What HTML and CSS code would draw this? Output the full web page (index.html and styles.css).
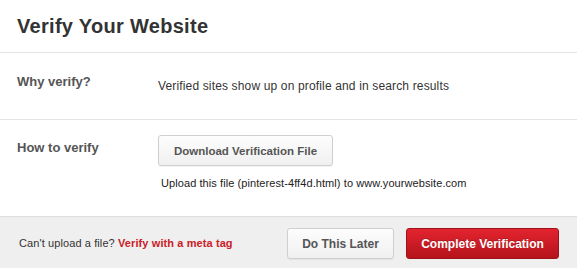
FILE: index.html
```html
<!DOCTYPE html>
<html>
<head>
<meta charset="utf-8">
<link rel="stylesheet" href="styles.css">
</head>
<body>
<div class="dialog">
  <div class="header">
    <h1 class="title">Verify Your Website</h1>
  </div>
  <div class="row row-why">
    <div class="label">Why verify?</div>
    <div class="content">
      <p class="desc">Verified sites show up on profile and in search results</p>
    </div>
  </div>
  <div class="row row-how">
    <div class="label">How to verify</div>
    <div class="content">
      <button class="btn btn-gray btn-download">Download Verification File</button>
      <p class="hint">Upload this file (pinterest-4ff4d.html) to www.yourwebsite.com</p>
    </div>
  </div>
  <div class="footer">
    <p class="footer-note">Can't upload a file? <a class="meta-link" href="#">Verify with a meta tag</a></p>
    <div class="actions">
      <button class="btn btn-gray btn-later">Do This Later</button>
      <button class="btn btn-red btn-complete">Complete Verification</button>
    </div>
  </div>
</div>
</body>
</html>
```

FILE: styles.css
```css
html, body {
  margin: 0;
  padding: 0;
  background: #fff;
}

.dialog {
  width: 577px;
  height: 268px;
  display: flex;
  flex-direction: column;
  font-family: "Liberation Sans", Arial, sans-serif;
  color: #333;
  overflow: hidden;
}

.header {
  height: 52px;
  flex: none;
  display: flex;
  align-items: center;
  padding-left: 17px;
  border-bottom: 1px solid #e3e3e3;
}

.title {
  margin: 0;
  font-size: 20px;
  line-height: 24px;
  font-weight: bold;
  letter-spacing: 0.3px;
  color: #333;
}

.row {
  display: flex;
  padding: 21px 17px 0;
  box-sizing: border-box;
}

.row-why {
  height: 67px;
  flex: none;
  border-bottom: 1px solid #e3e3e3;
}

.row-how {
  flex: 1;
  padding-top: 20px;
}

.label {
  width: 141px;
  flex: none;
  font-size: 13px;
  line-height: 16px;
  font-weight: bold;
  color: #555;
}

.content {
  flex: 1;
}

.desc {
  margin: 4px 0 0;
  font-size: 12px;
  line-height: 16px;
  letter-spacing: 0.15px;
  color: #333;
}

.btn {
  font-family: "Liberation Sans", Arial, sans-serif;
  font-weight: bold;
  font-size: 12px;
  height: 31px;
  border-radius: 3px;
  padding: 0;
  cursor: pointer;
}

.btn-gray {
  background: linear-gradient(#fdfdfd, #f0f0f0);
  border: 1px solid #cfcfcf;
  color: #555;
  box-shadow: 0 1px 1px rgba(0,0,0,0.05);
}

.btn-red {
  background: linear-gradient(#e2242f, #b5131b);
  border: 1px solid #a0121a;
  color: #fff;
  text-shadow: 0 -1px 0 rgba(0,0,0,0.2);
}

.btn-download {
  margin-top: -5px;
  width: 175px;
  font-size: 11.5px;
}

.hint {
  margin: 10px 0 0 3px;
  font-size: 11px;
  line-height: 14px;
  letter-spacing: 0.08px;
  color: #222;
}

.footer {
  height: 40px;
  flex: none;
  background: #efefef;
  border-top: 1px solid #dedede;
  display: flex;
  align-items: flex-start;
  justify-content: space-between;
  padding: 11px 18px 0 19px;
}

.footer-note {
  margin: 8px 0 0;
  font-size: 11px;
  line-height: 14px;
  letter-spacing: 0.1px;
  color: #333;
}

.meta-link {
  color: #cb2027;
  font-weight: bold;
  text-decoration: none;
}

.actions {
  display: flex;
  gap: 12px;
}

.btn-later {
  width: 107px;
}

.btn-complete {
  width: 153px;
}
```
